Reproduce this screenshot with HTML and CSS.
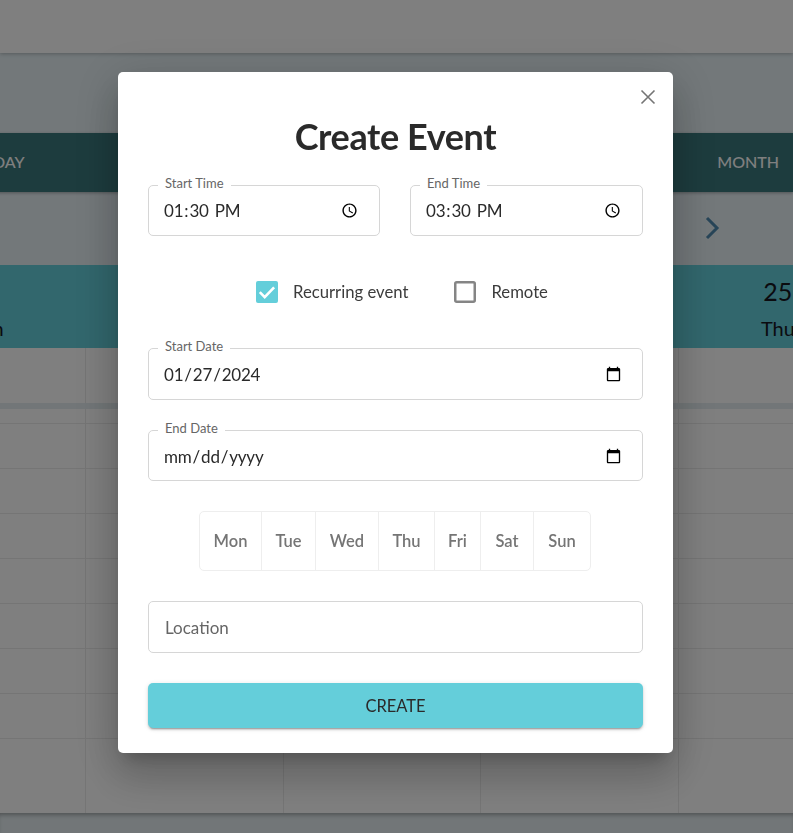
FILE: index.html
```html
<!DOCTYPE html>
<html lang="en">
<head>
<meta charset="utf-8">
<title>Create Event</title>
<link rel="stylesheet" href="styles.css">
</head>
<body>
<div class="app">
  <header class="topbar"></header>
  <section class="hero"></section>
  <nav class="tabs"><span class="tab">DAY</span><span class="tab">MONTH</span></nav>
  <div class="pager">
    <svg class="chevron" viewBox="0 0 16 24" width="16" height="24"><path d="M3 2l10 10L3 22" fill="none" stroke="currentColor" stroke-width="3"/></svg>
  </div>
  <div class="calendar">
    <div class="days">
      <div class="day"><b></b><span>Sun</span></div>
      <div class="day"></div>
      <div class="day"></div>
      <div class="day"></div>
      <div class="day"><b>25</b><span>Thu</span></div>
    </div>
    <div class="columns allday"><i></i><i></i><i></i><i></i><i></i></div>
    <div class="band"></div>
    <div class="columns hours"><i></i><i></i><i></i><i></i><i></i></div>
  </div>
  <footer class="footer"></footer>
</div>

<div class="scrim">
  <form class="modal">
    <button type="button" class="close" aria-label="Close">
      <svg viewBox="0 0 16 16" width="16" height="16"><path d="M1.5 1.5l13 13M14.5 1.5l-13 13" fill="none" stroke="currentColor" stroke-width="1.6"/></svg>
    </button>
    <h1 class="title">Create Event</h1>
    <div class="time-row">
      <div class="field"><label class="field-label">Start Time</label><input class="field-input" type="time" value="13:30"></div>
      <div class="field"><label class="field-label">End Time</label><input class="field-input" type="time" value="15:30"></div>
    </div>
    <div class="checks">
      <label class="check">
        <svg viewBox="0 0 22 22" width="22" height="22"><rect width="22" height="22" rx="2" fill="#64ceda"/><path d="M3.8 11.2l4.9 4.9 9.4-9.8" fill="none" stroke="#fff" stroke-width="2.6"/></svg>
        Recurring event
      </label>
      <label class="check">
        <svg viewBox="0 0 22 22" width="22" height="22"><rect x="1.25" y="1.25" width="19.5" height="19.5" rx="1.5" fill="none" stroke="#858585" stroke-width="2.5"/></svg>
        Remote
      </label>
    </div>
    <div class="field field-date"><label class="field-label">Start Date</label><input class="field-input" type="date" value="2024-01-27"></div>
    <div class="field field-date-end"><label class="field-label">End Date</label><input class="field-input" type="date"></div>
    <div class="weekdays">
      <span class="weekday">Mon</span><span class="weekday">Tue</span><span class="weekday">Wed</span><span class="weekday">Thu</span><span class="weekday">Fri</span><span class="weekday">Sat</span><span class="weekday">Sun</span>
    </div>
    <div class="field field-location"><input class="field-input location" type="text" placeholder="Location"></div>
    <button type="button" class="create">CREATE</button>
  </form>
</div>
</body>
</html>
```

FILE: styles.css
```css
* { box-sizing: border-box; }

html, body {
  margin: 0;
  height: 100%;
  overflow: hidden;
}

body {
  font-family: "Lato", "Noto Sans", sans-serif;
  color: #2a2a2a;
  background: #e4f0f5;
}

.app {
  height: 833px;
  display: flex;
  flex-direction: column;
  overflow: hidden;
}

.topbar {
  height: 53px;
  background: #fff;
  box-shadow: 0 1px 4px rgba(0, 0, 0, 0.25);
  position: relative;
}

.hero {
  height: 80px;
  background: #e6f1f5;
}

.tabs {
  height: 59px;
  background: #3a787c;
  color: #fff;
  display: flex;
  justify-content: space-between;
  align-items: center;
  padding: 0 14px 2px 0;
  margin-left: -7px;
  font-size: 16px;
  font-weight: 500;
  box-shadow: 0 1px 3px rgba(0, 0, 0, 0.3);
  position: relative;
}

.pager {
  height: 73px;
  background: #e6f0f5;
  display: flex;
  justify-content: flex-end;
  align-items: center;
  padding: 0 73px 2px 0;
  color: #4f8bb0;
}

.chevron { display: block; }

.calendar {
  flex: none;
  width: 1600px;
  margin-left: -111.6px;
}

.days {
  height: 83px;
  background: #64ceda;
  display: grid;
  grid-template-columns: repeat(8, 197.67px);
  color: #16161f;
}

.day {
  display: flex;
  flex-direction: column;
  align-items: center;
  padding-top: 10px;
  font-size: 20px;
}

.day b {
  min-height: 32px;
  font-weight: 400;
  font-size: 25px;
  line-height: 32px;
  margin-bottom: 9px;
}

.columns {
  display: grid;
  grid-template-columns: repeat(8, 197.67px);
  background-color: #fff;
}

.columns i { border-right: 1px solid #ebebeb; }

.allday { height: 55px; }

.band {
  height: 6px;
  background: #e4edf0;
}

.hours {
  height: 404px;
  background-image: repeating-linear-gradient(180deg, transparent 0 44px, #ebebeb 44px 45px);
  background-position: 0 -30px;
}

.footer {
  flex: 1;
  background: #e4edf0;
  box-shadow: inset 0 4px 4px -2px rgba(0, 0, 0, 0.3);
}

.scrim {
  position: fixed;
  inset: 0;
  z-index: 10;
  background: rgba(0, 0, 0, 0.5);
  padding: 72px 0 0 118px;
}

.modal {
  position: relative;
  width: 555px;
  height: 681px;
  background: #fff;
  border-radius: 5px;
  padding: 39px 30px 25px;
  display: flex;
  flex-direction: column;
  box-shadow:
    0 11px 15px -7px rgba(0, 0, 0, 0.2),
    0 24px 38px 3px rgba(0, 0, 0, 0.14),
    0 9px 46px 8px rgba(0, 0, 0, 0.12);
}

.close {
  position: absolute;
  top: 17px;
  right: 17px;
  width: 16px;
  height: 16px;
  padding: 0;
  border: 0;
  background: none;
  color: #757575;
}

.close svg { display: block; }

.title {
  margin: 0;
  height: 74px;
  text-align: center;
  font-size: 36px;
  line-height: 50px;
  font-weight: 700;
  letter-spacing: -0.4px;
  color: #2a2a2a;
}

.time-row {
  display: grid;
  grid-template-columns: 232px 233px;
  gap: 30px;
}

.field {
  position: relative;
  height: 51px;
  border: 1px solid #d6d6d6;
  border-radius: 5px;
}

.field-label {
  position: absolute;
  top: -11px;
  left: 9px;
  padding: 0 7px;
  background: #fff;
  font-size: 13px;
  line-height: 16px;
  color: #666;
}

.field-input {
  display: block;
  width: 100%;
  height: 100%;
  padding: 0 17px 0 14px;
  border: 0;
  outline: 0;
  background: transparent;
  font-family: inherit;
  font-size: 17px;
  letter-spacing: -0.2px;
  color: #2a2a2a;
}

.field-date { height: 52px; }
.field-date-end { height: 51px; margin-top: 30px; }

.field-date .field-input { padding-right: 18px; }
.field-date-end .field-input { padding: 1px 18px 0 14px; }

.checks {
  height: 22px;
  margin: 45px 0;
  padding-left: 108px;
  display: flex;
  gap: 46px;
}

.check {
  display: flex;
  align-items: center;
  gap: 15px;
  font-size: 16.7px;
  color: #3c3c3c;
}

.weekdays {
  align-self: flex-start;
  margin: 30px 0 30px 51px;
  height: 60px;
  display: grid;
  grid-template-columns: 61px 54px 63px 56px 46px 53px 57px;
  border: 1px solid #eee;
  border-radius: 5px;
}

.weekday {
  display: flex;
  align-items: center;
  justify-content: center;
  border-left: 1px solid #eee;
  font-size: 16.5px;
  font-weight: 600;
  color: #757575;
}

.weekday:first-child { border-left: 0; }

.field-location { height: 52px; }

.location {
  padding-left: 16px;
  letter-spacing: 0;
}

.location::placeholder { color: #666; opacity: 1; }

.create {
  height: 45px;
  margin-top: 30px;
  border: 0;
  border-radius: 5px;
  background: #64ceda;
  font-family: inherit;
  font-size: 16.5px;
  color: #2a2a2a;
  box-shadow: 0 3px 1px -2px rgba(0, 0, 0, 0.2), 0 2px 2px rgba(0, 0, 0, 0.14), 0 1px 5px rgba(0, 0, 0, 0.12);
}
```
